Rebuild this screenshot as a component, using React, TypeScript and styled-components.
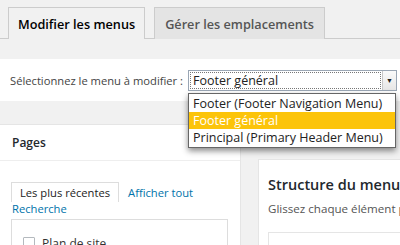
import React from 'react'
import styled, { createGlobalStyle } from 'styled-components'

const GlobalStyle = createGlobalStyle`
    html, body {
        margin: 0;
        padding: 0;
        background: #f1f1f1;
        font-family: "Open Sans", "Liberation Sans", sans-serif;
        color: #23282d;
        overflow: hidden;
    }
`

const Page = styled.div`
    width: 400px;
    height: 245px;
    overflow: hidden;
`

const TabBar = styled.div`
    display: flex;
    gap: 9px;
    padding: 7px 0 0 8px;
    border-bottom: 1px solid #ccc;
    height: 31px;
`

const Tab = styled.div<{ active?: boolean }>`
    display: flex;
    align-items: center;
    padding: 0 ${p => (p.active ? '9px' : '10px')};
    box-sizing: border-box;
    border: 1px solid #ccc;
    border-bottom: none;
    margin-bottom: -1px;
    font-size: 12.7px;
    font-weight: 600;
    white-space: nowrap;
    background: ${p => (p.active ? '#f1f1f1' : '#e4e4e4')};
    color: ${p => (p.active ? '#000' : '#555')};
    height: 32px;
`

const ManageBar = styled.div`
    margin-top: 20px;
    height: 42px;
    background: #fff;
    display: flex;
    align-items: center;
    padding: 0 10px;
    gap: 5px;
    font-size: 11.2px;
    color: #444;
    white-space: nowrap;
`

const SelectWrap = styled.div`
    position: relative;
`

const SelectBox = styled.div`
    width: 209px;
    height: 21px;
    box-sizing: border-box;
    border: 1px solid #9aa6b4;
    background: #fff;
    display: flex;
    align-items: stretch;
    font-size: 12.5px;
    color: #222;
`

const SelectValue = styled.div`
    flex: 1;
    margin: 1px;
    padding: 0 2px;
    border: 1px dotted #777;
    display: flex;
    align-items: center;
`

const SelectArrow = styled.div`
    width: 13px;
    border-left: 1px solid #c8c8c8;
    background: linear-gradient(#fafafa, #e6e6e6);
    display: flex;
    align-items: center;
    justify-content: center;
    font-size: 7px;
    color: #222;
`

const Options = styled.ul`
    position: absolute;
    left: 0;
    top: 23px;
    width: 208px;
    margin: 0;
    padding: 1px 0;
    list-style: none;
    background: #fff;
    border: 1px solid #666;
    box-sizing: border-box;
    box-shadow: 0 3px 6px rgba(0, 0, 0, 0.45);
    z-index: 10;
`

const Option = styled.li<{ selected?: boolean }>`
    height: 17px;
    line-height: 17px;
    padding: 0 4px;
    font-size: 12.5px;
    white-space: nowrap;
    background: ${p => (p.selected ? '#fcc40a' : 'transparent')};
    color: ${p => (p.selected ? '#fff' : '#222')};
`

const Columns = styled.div`
    display: grid;
    grid-template-columns: 241px 142px;
    column-gap: 17px;
    margin-top: 23px;
`

const Panel = styled.div`
    background: #fff;
    border: 1px solid #e5e5e5;
    border-left: none;
    height: 140px;
`

const PanelHead = styled.div`
    height: 35px;
    border-bottom: 1px solid #eee;
    display: flex;
    align-items: center;
    padding-left: 12px;
    font-size: 12px;
    font-weight: 600;
`

const PanelBody = styled.div`
    padding: 21px 11px 0 11px;
    font-size: 11.2px;
`

const InnerTabs = styled.div`
    display: flex;
    flex-wrap: wrap;
    align-items: center;
    column-gap: 7px;
`

const InnerTab = styled.div<{ current?: boolean }>`
    height: 19px;
    line-height: 19px;
    padding: 0 ${p => (p.current ? '8px' : '1px')};
    color: ${p => (p.current ? '#222' : '#0073aa')};
    border: ${p => (p.current ? '1px solid #ddd' : '1px solid transparent')};
    border-bottom: none;
`

const LinkRow = styled.div`
    width: 100%;
    padding-left: 1px;
    color: #0073aa;
    line-height: 14px;
`

const ListBox = styled.div`
    margin-top: 3px;
    width: 217px;
    height: 40px;
    border: 1px solid #ddd;
    padding: 15px 0 0 11px;
    box-sizing: border-box;
    display: flex;
    gap: 7px;
    color: #333;
    font-size: 12px;
`

const Check = styled.span`
    width: 12px;
    height: 12px;
    border: 1px solid #b4b9be;
    border-radius: 1px;
    box-sizing: border-box;
    margin-top: 2px;
`

const StructurePanel = styled.div`
    background: #fff;
    border: 1px solid #e5e5e5;
    border-right: none;
    margin-top: 35px;
    height: 110px;
    padding: 14px 0 0 9px;
    box-sizing: border-box;
`

const StructureTitle = styled.div`
    font-size: 14.5px;
    line-height: 22px;
    font-weight: 600;
    white-space: nowrap;
    color: #23282d;
`

const StructureHint = styled.div`
    margin-top: 4px;
    font-size: 11.6px;
    line-height: 18px;
    white-space: nowrap;
    color: #555;
`

const StructureBox = styled.div`
    margin-top: 14px;
    height: 40px;
    border: 1px solid #e5e5e5;
    border-right: none;
`

export default function App() {
    return (
        <Page>
            <GlobalStyle />
            <TabBar>
                <Tab active>Modifier les menus</Tab>
                <Tab>Gérer les emplacements</Tab>
            </TabBar>
            <ManageBar>
                <span>Sélectionnez le menu à modifier :</span>
                <SelectWrap>
                    <SelectBox>
                        <SelectValue>Footer général</SelectValue>
                        <SelectArrow>▼</SelectArrow>
                    </SelectBox>
                    <Options>
                        <Option>Footer (Footer Navigation Menu)</Option>
                        <Option selected>Footer général</Option>
                        <Option>Principal (Primary Header Menu)</Option>
                    </Options>
                </SelectWrap>
            </ManageBar>
            <Columns>
                <Panel>
                    <PanelHead>Pages</PanelHead>
                    <PanelBody>
                        <InnerTabs>
                            <InnerTab current>Les plus récentes</InnerTab>
                            <InnerTab>Afficher tout</InnerTab>
                            <LinkRow>Recherche</LinkRow>
                        </InnerTabs>
                        <ListBox>
                            <Check />
                            <span>Plan de site</span>
                        </ListBox>
                    </PanelBody>
                </Panel>
                <StructurePanel>
                    <StructureTitle>Structure du menu</StructureTitle>
                    <StructureHint>Glissez chaque élément pour les placer</StructureHint>
                    <StructureBox />
                </StructurePanel>
            </Columns>
        </Page>
    )
}
